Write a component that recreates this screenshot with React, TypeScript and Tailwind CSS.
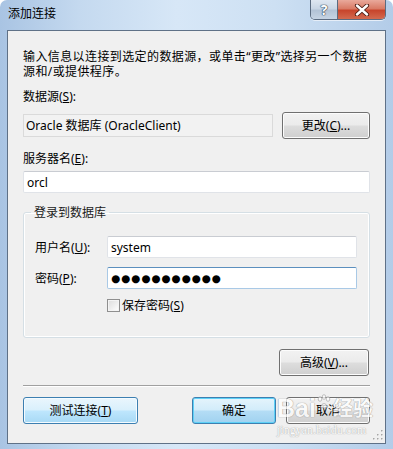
import React from "react";

const font = "font-['Noto_Sans','Noto_Sans_CJK_SC',sans-serif]";

const Btn = ({
  children,
  className = "",
  tone = "gray",
}: {
  children: React.ReactNode;
  className?: string;
  tone?: "gray" | "blue" | "default";
}) => {
  const skin =
    tone === "gray"
      ? "border-[#707070] bg-[linear-gradient(#f2f2f2_0%,#ebebeb_48%,#dddddd_52%,#cfcfcf_100%)] shadow-[inset_0_0_0_1px_#fcfcfc]"
      : tone === "blue"
        ? "border-[#3c7fb1] bg-[linear-gradient(#eaf6fd_0%,#d9f0fc_48%,#bee6fd_52%,#a7d9f5_100%)] shadow-[inset_0_0_0_1px_#f4fbff]"
        : "border-[#3c7fb1] bg-[linear-gradient(#e5f4fc_0%,#d2ecfa_48%,#b4ddf5_52%,#a0d2f0_100%)] shadow-[inset_0_0_0_1px_#5ed1f7]";
  return (
    <div
      className={`flex h-[27px] items-center justify-center rounded-[3px] border text-[12px] text-black ${skin} ${className}`}
    >
      {children}
    </div>
  );
};

const Field = ({
  children,
  className = "",
  focused = false,
}: {
  children?: React.ReactNode;
  className?: string;
  focused?: boolean;
}) => (
  <div
    className={`flex h-[22px] items-center rounded-[2px] border bg-white px-[3px] text-[12px] text-black ${
      focused
        ? "border-[#a9c9e6] border-t-[#5b8fbe]"
        : "border-[#e0e3e8] border-t-[#c9ccd2]"
    } ${className}`}
  >
    {children}
  </div>
);

const GripDots = () => (
  <svg width="10" height="10" viewBox="0 0 10 10">
    {[
      [8, 0],
      [4, 4],
      [8, 4],
      [0, 8],
      [4, 8],
      [8, 8],
    ].map(([x, y]) => (
      <g key={`${x}-${y}`}>
        <rect x={x + 1} y={y + 1} width="1" height="1" fill="#ffffff" />
        <rect x={x} y={y} width="1.5" height="1.5" fill="#a6a6a6" />
      </g>
    ))}
  </svg>
);

export default function App() {
  return (
    <div
      className={`relative flex h-[449px] w-[393px] flex-col overflow-hidden rounded-t-[7px] bg-[linear-gradient(90deg,#a9c4e3_0%,#c4d9ef_20%,#d7e7f7_45%,#cde0f3_70%,#b3cce8_100%)] ${font}`}
    >
      {/* title bar */}
      <div className="flex h-[30px] shrink-0 items-start">
        <div className="pl-[8px] pt-[6px] text-[12px] leading-[16px] text-black">
          添加连接
        </div>
        <div className="ml-auto mr-[7px] flex h-[20px] overflow-hidden rounded-b-[5px] border border-t-0 border-[#5b6b80] shadow-[0_1px_0_#e6eef8]">
          <div className="flex w-[27px] items-center justify-center border-r border-[#5b6b80] bg-[linear-gradient(#dfe7f1_0%,#c9d6e5_45%,#b3c3d6_55%,#c6d4e4_100%)]">
            <span className="text-[14px] font-bold leading-none text-white [text-shadow:0_0_1px_#26374d,0_0_1px_#26374d,0_0_1px_#26374d]">
              ?
            </span>
          </div>
          <div className="flex w-[47px] items-center justify-center bg-[linear-gradient(#e9a99b_0%,#d97b66_45%,#c8452c_55%,#d36a4f_100%)]">
            <svg width="16" height="12" viewBox="0 0 16 12">
              <path
                d="M3 1.5 L13 10.5 M13 1.5 L3 10.5"
                stroke="#4a1b12"
                strokeWidth="4.2"
                strokeLinecap="round"
              />
              <path
                d="M3 1.5 L13 10.5 M13 1.5 L3 10.5"
                stroke="#ffffff"
                strokeWidth="2.4"
                strokeLinecap="round"
              />
            </svg>
          </div>
        </div>
      </div>

      {/* client area */}
      <div className="relative mx-[7px] mb-[5px] flex flex-1 flex-col border border-[#5f7187] bg-[#f0f0f0] px-[15px] pt-[18px] text-[12px] leading-[15px] text-black">
        <p className="tracking-[0.4px]">
          输入信息以连接到选定的数据源，或单击“更改”选择另一个数据源和/或提供程序。
        </p>

        <div className="mt-[10px]">
          数据源(<u>S</u>):
        </div>
        <div className="mt-[8px] flex items-center justify-between">
          <div className="flex h-[23px] w-[250px] items-center border border-[#dadada] bg-[#f2f2f2] px-[2px]">
            Oracle 数据库 (OracleClient)
          </div>
          <Btn className="w-[88px]">
            更改(<u>C</u>)...
          </Btn>
        </div>

        <div className="mt-[12px]">
          服务器名(<u>E</u>):
        </div>
        <Field className="mt-[5px]">orcl</Field>

        <fieldset className="mt-[12px] rounded-[3px] border border-[#d5dfe5] pb-[24px] pl-[11px] pr-[12px] shadow-[inset_0_0_0_1px_#ffffff]">
          <legend className="ml-[-4px] px-[3px] leading-[15px] text-[#1a1a1a]">
            登录到数据库
          </legend>
          <div className="mt-[16px] grid grid-cols-[72px_1fr] items-center gap-y-[9px]">
            <div>
              用户名(<u>U</u>):
            </div>
            <Field>system</Field>
            <div>
              密码(<u>P</u>):
            </div>
            <Field focused>
              <span className="font-['DejaVu_Sans',sans-serif] text-[10.5px] tracking-[0.9px]">
                ●●●●●●●●●●●
              </span>
            </Field>
            <div />
            <div className="flex items-center gap-[2px]">
              <div className="h-[13px] w-[13px] border border-[#8f8f8f] bg-[linear-gradient(135deg,#dcdcdc,#ffffff)] shadow-[inset_0_0_0_1px_#f4f4f4]" />
              <span>
                保存密码(<u>S</u>)
              </span>
            </div>
          </div>
        </fieldset>

        <Btn className="mt-[11px] mr-[1px] w-[90px] self-end">
          高级(<u>V</u>)...
        </Btn>

        <div className="mt-[9px] h-[2px] border-t border-b border-t-[#a0a0a0] border-b-white" />

        <div className="mt-[10px] flex items-center">
          <Btn tone="blue" className="w-[115px]">
            测试连接(<u>T</u>)
          </Btn>
          <Btn tone="default" className="ml-auto w-[84px]">
            确定
          </Btn>
          <Btn className="ml-[10px] w-[84px]">取消</Btn>
        </div>

        <div className="absolute bottom-[3px] right-[2px]">
          <GripDots />
        </div>
      </div>

      {/* baidu watermark */}
      <div className="pointer-events-none absolute left-[277px] top-[394px] flex flex-col items-start opacity-75">
        <div className="flex items-end text-white [text-shadow:0_0_1px_#8a8a8a,0_0_1px_#8a8a8a]">
          <span className="font-['Liberation_Sans',sans-serif] text-[25px] font-bold leading-[28px]">
            Bai
          </span>
          <svg width="16" height="16" viewBox="0 0 16 16" className="mb-[12px]">
            <g fill="#ffffff" stroke="#9a9a9a" strokeWidth="0.8">
              <ellipse cx="4" cy="5" rx="1.8" ry="2.3" />
              <ellipse cx="8" cy="3" rx="1.8" ry="2.3" />
              <ellipse cx="12" cy="5" rx="1.8" ry="2.3" />
              <path d="M4 13 Q8 6 12 13 Q8 15 4 13 Z" />
            </g>
          </svg>
          <span className="ml-[1px] text-[20px] font-bold leading-[26px]">
            经验
          </span>
        </div>
        <div className="mt-[2px] font-['Liberation_Serif',serif] text-[12px] leading-[12px] text-white [text-shadow:0_0_1px_#9a9a9a,0_0_1px_#9a9a9a]">
          jingyan.baidu.com
        </div>
      </div>
    </div>
  );
}
